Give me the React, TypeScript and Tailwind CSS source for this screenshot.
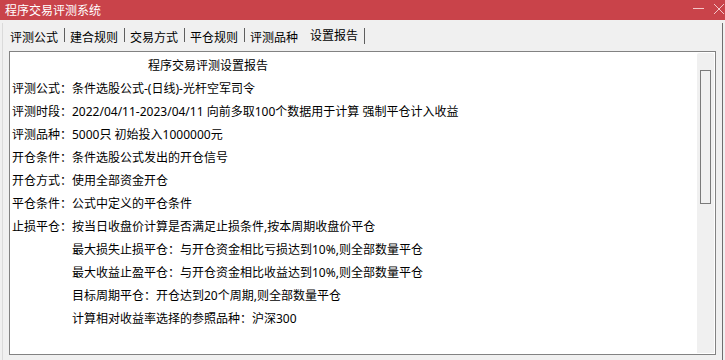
import React from "react";

const tabs = ["评测公式", "建合规则", "交易方式", "平仓规则", "评测品种", "设置报告"];

const lines: { text: string; indent?: boolean }[] = [
  { text: "评测公式：条件选股公式-(日线)-光杆空军司令" },
  { text: "评测时段：2022/04/11-2023/04/11 向前多取100个数据用于计算 强制平仓计入收益" },
  { text: "评测品种：5000只 初始投入1000000元" },
  { text: "开仓条件：条件选股公式发出的开仓信号" },
  { text: "开仓方式：使用全部资金开仓" },
  { text: "平仓条件：公式中定义的平仓条件" },
  { text: "止损平仓：按当日收盘价计算是否满足止损条件,按本周期收盘价平仓" },
  { text: "最大损失止损平仓：与开仓资金相比亏损达到10%,则全部数量平仓", indent: true },
  { text: "最大收益止盈平仓：与开仓资金相比收益达到10%,则全部数量平仓", indent: true },
  { text: "目标周期平仓：开仓达到20个周期,则全部数量平仓", indent: true },
  { text: "计算相对收益率选择的参照品种：沪深300", indent: true },
];

export default function App() {
  return (
    <div
      className="w-[725px] h-[360px] bg-[#f0f0f0] flex flex-col overflow-hidden"
      style={{ fontFamily: '"Noto Sans CJK SC", "Noto Sans", sans-serif' }}
    >
      {/* title bar */}
      <div className="h-[20px] bg-[#c9434a] flex items-center pl-[5px] relative">
        <span className="text-white text-[12px] leading-[20px]">程序交易评测系统</span>
        <div className="ml-auto flex items-center h-full">
          <svg width="12" height="20" viewBox="0 0 12 20" className="mr-[8px]">
            <line x1="0" y1="8.5" x2="11" y2="8.5" stroke="#f3c6c8" strokeWidth="1" />
          </svg>
          <svg width="12" height="20" viewBox="0 0 12 20">
            <line x1="1" y1="4" x2="11" y2="14" stroke="#f3c6c8" strokeWidth="1" />
            <line x1="11" y1="4" x2="1" y2="14" stroke="#f3c6c8" strokeWidth="1" />
          </svg>
        </div>
      </div>

      {/* body */}
      <div className="flex-1 flex pl-[2px] pr-[2px] pt-[3px]">
        <div className="flex-1 flex flex-col border-l border-l-[#dadada] border-r border-r-[#6e6e6e]">
          {/* tabs */}
          <div className="h-[28px] flex items-start pl-[2px]">
            {tabs.map((t, i) => {
              const selected = i === tabs.length - 1;
              const hideSep = i === tabs.length - 2;
              return (
                <div key={t} className="flex items-start">
                  <span
                    className={
                      "pl-[5px] pr-[6px] text-[12px] leading-[14px] text-black whitespace-nowrap " +
                      (selected ? "mt-[5px]" : "mt-[7px]")
                    }
                  >
                    {t}
                  </span>
                  {hideSep ? (
                    <div className="w-px h-[14px] mt-[5px]" />
                  ) : (
                    <div
                      className={
                        "w-px mt-[5px] bg-[#5e5e5e] " + (selected ? "h-[16px]" : "h-[14px]")
                      }
                    />
                  )}
                </div>
              );
            })}
          </div>

          {/* panel */}
          <div className="ml-[6px] mr-[6px] mb-[5px] flex-1 flex border border-[#828282] bg-white">
            <div
              className="flex-1 pl-[2px] pt-[2px] text-[12px] leading-[23px] text-black whitespace-nowrap"
              style={{ fontFamily: '"Noto Sans", "Noto Sans CJK SC", sans-serif' }}
            >
              <div className="pl-[136px]">程序交易评测设置报告</div>
              {lines.map((l, i) => (
                <div key={i} className={l.indent ? "pl-[60px]" : ""}>
                  {l.text}
                </div>
              ))}
            </div>
            <div className="w-[17px] mr-[1px] mt-[1px] mb-[1px] bg-[#f0f0f0] rounded-t-[2px]">
              <div className="ml-[3px] mt-[17px] w-[11px] h-[134px] border border-[#7a7a7a] bg-[#f0f0f0]" />
            </div>
          </div>
        </div>
      </div>
    </div>
  );
}
